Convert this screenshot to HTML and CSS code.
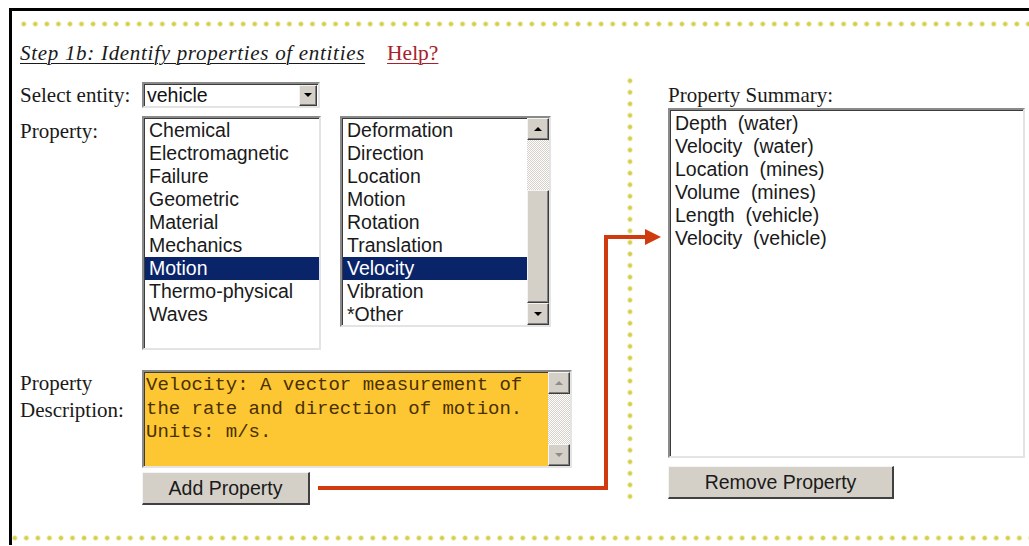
FILE: index.html
```html
<!DOCTYPE html>
<html lang="en">
<head>
<meta charset="utf-8">
<title>Step 1b: Identify properties of entities</title>
<link rel="stylesheet" href="styles.css">
</head>
<body>
<div class="frame">
  <div class="dots-h"></div>

  <div class="title-row">
    <span class="step-title">Step 1b: Identify properties of entities</span>
    <a class="help" href="#">Help?</a>
  </div>

  <div class="main">
    <div class="left">
      <div class="field">
        <span class="label">Select entity:</span>
        <div class="select inset">
          <span class="select-value">vehicle</span>
          <span class="btn3d select-btn"><span class="arrow down"></span></span>
        </div>
      </div>

      <div class="field lists">
        <span class="label">Property:</span>
        <div class="listbox inset list-cat">
          <ul class="items">
            <li>Chemical</li>
            <li>Electromagnetic</li>
            <li>Failure</li>
            <li>Geometric</li>
            <li>Material</li>
            <li>Mechanics</li>
            <li class="sel">Motion</li>
            <li>Thermo-physical</li>
            <li>Waves</li>
          </ul>
        </div>
        <div class="listbox inset list-sub">
          <ul class="items">
            <li>Deformation</li>
            <li>Direction</li>
            <li>Location</li>
            <li>Motion</li>
            <li>Rotation</li>
            <li>Translation</li>
            <li class="sel">Velocity</li>
            <li>Vibration</li>
            <li>*Other</li>
          </ul>
          <div class="sb">
            <span class="btn3d sb-btn"><span class="arrow up"></span></span>
            <span class="sb-track track-a"></span>
            <span class="btn3d sb-thumb"></span>
            <span class="btn3d sb-btn"><span class="arrow down"></span></span>
          </div>
        </div>
      </div>

      <div class="field desc">
        <span class="label">Property<br>Description:</span>
        <div class="desc-col">
          <div class="textarea inset">
            <p class="desc-text">Velocity: A vector measurement of<br>the rate and direction of motion.<br>Units: m/s.</p>
            <div class="sb">
              <span class="btn3d sb-btn"><span class="arrow up off"></span></span>
              <span class="sb-track track-b"></span>
              <span class="btn3d sb-btn"><span class="arrow down off"></span></span>
            </div>
          </div>
          <button class="btn3d push add-btn">Add Property</button>
        </div>
      </div>
    </div>

    <div class="dots-v"></div>

    <div class="right">
      <span class="label summary-label">Property Summary:</span>
      <div class="listbox inset summary">
        <ul class="items">
          <li>Depth&nbsp; (water)</li>
          <li>Velocity&nbsp; (water)</li>
          <li>Location&nbsp; (mines)</li>
          <li>Volume&nbsp; (mines)</li>
          <li>Length&nbsp; (vehicle)</li>
          <li>Velocity&nbsp; (vehicle)</li>
        </ul>
      </div>
      <button class="btn3d push remove-btn">Remove Property</button>
    </div>

    <!-- connector from the add button to the summary list -->
    <svg class="flow-arrow" width="360" height="270" viewBox="0 0 360 270">
      <path d="M0 253 H288 V2 H330" fill="none" stroke="#cf3a0e" stroke-width="4"/>
      <polygon points="327,-6 343,2 327,10" fill="#cf3a0e"/>
    </svg>
  </div>

  <div class="dots-h bottom"></div>
</div>
</body>
</html>
```

FILE: styles.css
```css
html, body {
  margin: 0;
  padding: 0;
  background: #fff;
}

body {
  width: 1029px;
  height: 546px;
  overflow: hidden;
  font-family: "Liberation Serif", "Times New Roman", serif;
  color: #111;
}

.frame {
  margin: 8px 0 0 9px;
  border-top: 3px solid #000;
  border-left: 3px solid #000;
  height: 524px;
  padding-top: 10px;
}

/* dotted yellow rules */
.dots-h {
  margin-left: 6px;
  height: 6px;
  background: radial-gradient(circle, #d3cf4f 0 1.5px, rgba(226, 222, 110, 0.55) 2.3px, transparent 3.2px) 0 0 / 11.55px 6px repeat-x;
}

.dots-h.bottom {
  margin-top: 26px;
  margin-left: -3px;
}

.dots-v {
  width: 6px;
  align-self: stretch;
  background: radial-gradient(circle, #d3cf4f 0 1.5px, rgba(226, 222, 110, 0.55) 2.3px, transparent 3.2px) 0 -3px / 6px 11.55px repeat-y;
}

/* heading */
.title-row {
  display: flex;
  align-items: baseline;
  gap: 22px;
  padding-left: 8px;
  margin-top: 12px;
  height: 28px;
  line-height: 28px;
}

.step-title {
  font-style: italic;
  font-size: 21px;
  letter-spacing: 0.7px;
  text-decoration: underline;
  text-decoration-thickness: 1px;
  text-underline-offset: 3px;
  color: #1a1a1a;
}

.help {
  font-size: 21.5px;
  color: #a8202a;
  text-decoration: underline;
  text-decoration-thickness: 1px;
  text-underline-offset: 3px;
}

/* two columns */
.main {
  position: relative;
  display: flex;
  margin-top: 11px;
  padding-left: 8px;
  padding-bottom: 4px;
}

.left {
  width: 607px;
  padding-top: 4px;
  display: flex;
  flex-direction: column;
}

.right {
  margin-left: 35px;
  width: 357px;
  padding-top: 6px;
  display: flex;
  flex-direction: column;
}

.field {
  display: flex;
  align-items: flex-start;
}

.label {
  width: 122px;
  flex: none;
  font-size: 21px;
  line-height: 26px;
  color: #1a1a1a;
}

.lists {
  margin-top: 8px;
}

.lists .label {
  line-height: 26px;
  margin-top: 2px;
}

.desc {
  margin-top: 20px;
}

.desc .label {
  line-height: 27px;
  margin-top: 0;
}

/* sunken win-classic boxes */
.inset {
  box-sizing: border-box;
  border: 2px solid;
  border-color: #8a8a8a #e4e4e4 #e4e4e4 #8a8a8a;
  box-shadow: inset 1px 1px #3c3c3c;
  background: #fff;
}

.btn3d {
  box-sizing: border-box;
  background: #d4d0c8;
  border: 1px solid;
  border-color: #f4f4f4 #3c3c3c #3c3c3c #f4f4f4;
  box-shadow: inset -1px -1px #808080;
}

.arrow {
  width: 0;
  height: 0;
  border-left: 4px solid transparent;
  border-right: 4px solid transparent;
}

.arrow.down {
  border-top: 4px solid #000;
}

.arrow.up {
  border-bottom: 4px solid #000;
}

.arrow.off.down {
  border-top-color: #8c8c8c;
}

.arrow.off.up {
  border-bottom-color: #8c8c8c;
}

/* dropdown */
.select {
  width: 178px;
  height: 26px;
  display: flex;
  align-items: center;
  justify-content: space-between;
  padding: 1px 1px 1px 3px;
}

.select-value {
  font-family: "Liberation Sans", Arial, sans-serif;
  font-size: 19.5px;
  color: #111;
}

.select-btn {
  width: 18px;
  height: 21px;
  display: flex;
  align-items: center;
  justify-content: center;
}

/* list boxes */
.listbox {
  display: flex;
  overflow: hidden;
}

.items {
  list-style: none;
  margin: 0;
  padding: 1px 0 0 1px;
  flex: 1;
  font-family: "Liberation Sans", Arial, sans-serif;
  font-size: 19.5px;
  line-height: 23px;
  color: #1a1a1a;
}

.items li {
  padding-left: 4px;
  white-space: nowrap;
}

.items li.sel {
  background: #0a246a;
  color: #fff;
}

.list-cat {
  width: 179px;
  height: 234px;
}

.list-sub {
  width: 211px;
  height: 211px;
  margin-left: 19px;
}

.sb {
  width: 22px;
  flex: none;
  display: flex;
  flex-direction: column;
}

.sb-btn {
  height: 22px;
  flex: none;
  display: flex;
  align-items: center;
  justify-content: center;
}

.sb-track {
  background: repeating-conic-gradient(#d4d0c8 0 25%, #fff 0 50%) 0 0 / 2px 2px;
}

.track-a {
  height: 50px;
  flex: none;
}

.track-b {
  flex: 1;
}

.sb-thumb {
  flex: 1;
}

/* description */
.desc-col {
  display: flex;
  flex-direction: column;
}

.textarea {
  width: 430px;
  height: 98px;
  display: flex;
  background: #fcc733;
}

.desc-text {
  margin: 0;
  flex: 1;
  padding: 2px 0 0 2px;
  font-family: "Liberation Mono", "Courier New", monospace;
  font-size: 19px;
  line-height: 23.5px;
  color: #4a3000;
  white-space: nowrap;
}

.push {
  font-family: "Liberation Sans", Arial, sans-serif;
  font-size: 19.5px;
  color: #1a1a1a;
  padding: 0;
  cursor: pointer;
  border-width: 1px 2px 2px 1px;
  box-shadow: none;
  border-color: #f4f4f4 #404040 #404040 #f4f4f4;
}

.add-btn {
  margin-top: 4px;
  width: 168px;
  height: 33px;
}

/* summary */
.summary-label {
  width: auto;
  line-height: 22px;
  height: 24px;
}

.summary {
  width: 357px;
  height: 350px;
}

.summary .items {
  padding-top: 2px;
  padding-left: 1px;
}

.remove-btn {
  margin-top: 8px;
  width: 226px;
  height: 33px;
}

/* connector overlay */
.flow-arrow {
  position: absolute;
  left: 306px;
  top: 157px;
  overflow: visible;
  pointer-events: none;
}
```
